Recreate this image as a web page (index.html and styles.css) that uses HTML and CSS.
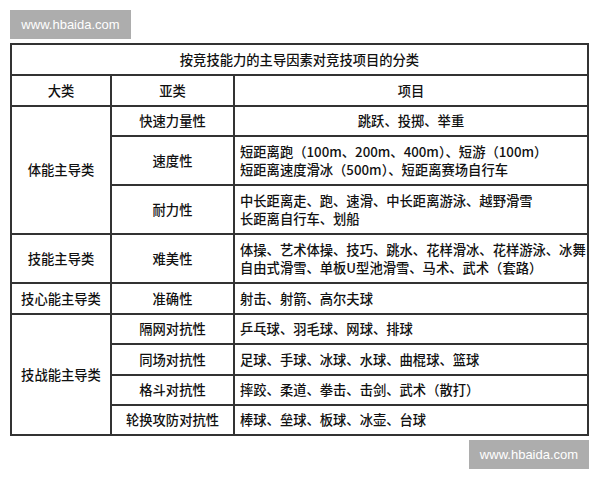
FILE: index.html
```html
<!DOCTYPE html>
<html lang="zh">
<head>
<meta charset="utf-8">
<title>按竞技能力的主导因素对竞技项目的分类</title>
<link rel="stylesheet" href="styles.css">
</head>
<body>
<div class="page">
  <div class="mark">www.hbaida.com</div>
  <div class="grid">
    <div class="cell title">按竞技能力的主导因素对竞技项目的分类</div>

    <div class="cell c">大类</div>
    <div class="cell c">亚类</div>
    <div class="cell c">项目</div>

    <div class="cell c span3">体能主导类</div>
    <div class="cell c">快速力量性</div>
    <div class="cell c">跳跃、投掷、举重</div>
    <div class="cell c">速度性</div>
    <div class="cell l">短距离跑（100m、200m、400m）、短游（100m）<br>短距离速度滑冰（500m）、短距离赛场自行车</div>
    <div class="cell c">耐力性</div>
    <div class="cell l">中长距离走、跑、速滑、中长距离游泳、越野滑雪<br>长距离自行车、划船</div>

    <div class="cell c">技能主导类</div>
    <div class="cell c">难美性</div>
    <div class="cell l">体操、艺术体操、技巧、跳水、花样滑冰、花样游泳、冰舞<br>自由式滑雪、单板U型池滑雪、马术、武术（套路）</div>

    <div class="cell c">技心能主导类</div>
    <div class="cell c">准确性</div>
    <div class="cell l">射击、射箭、高尔夫球</div>

    <div class="cell c span4">技战能主导类</div>
    <div class="cell c">隔网对抗性</div>
    <div class="cell l">乒乓球、羽毛球、网球、排球</div>
    <div class="cell c">同场对抗性</div>
    <div class="cell l">足球、手球、冰球、水球、曲棍球、篮球</div>
    <div class="cell c">格斗对抗性</div>
    <div class="cell l">摔跤、柔道、拳击、击剑、武术（散打）</div>
    <div class="cell c">轮换攻防对抗性</div>
    <div class="cell l">棒球、垒球、板球、冰壶、台球</div>
  </div>
  <div class="mark mark-end">www.hbaida.com</div>
</div>
</body>
</html>
```

FILE: styles.css
```css
html, body {
  margin: 0;
  padding: 0;
  background: #ffffff;
}

.page {
  width: 579px;
  padding: 10px;
  display: flex;
  flex-direction: column;
}

.mark {
  width: 121px;
  height: 29px;
  background: #adadad;
  color: #ffffff;
  font-family: "Liberation Sans", Arial, sans-serif;
  font-size: 13px;
  line-height: 30px;
  text-align: center;
}

.mark-end {
  align-self: flex-end;
  width: 120px;
  margin-top: 4px;
}

.grid {
  margin-top: 4px;
  display: grid;
  grid-template-columns: 98px 121px 352px;
  grid-template-rows: 29px 29px 28px 47px 47px 47px 29px 28px 29px 28px 28px;
  gap: 2px;
  padding: 2px;
  background: #333333;
  font-family: "Noto Sans CJK SC", "Noto Sans", sans-serif;
  font-size: 13.3px;
  font-weight: 500;
  line-height: 18px;
  color: #111111;
}

.cell {
  background: #ffffff;
  display: flex;
  align-items: center;
  white-space: nowrap;
}

.title {
  grid-column: 1 / 4;
  justify-content: center;
}

.c {
  justify-content: center;
  text-align: center;
}

.l {
  padding-left: 5px;
}

.span3 {
  grid-row: span 3;
}

.span4 {
  grid-row: span 4;
}
```
